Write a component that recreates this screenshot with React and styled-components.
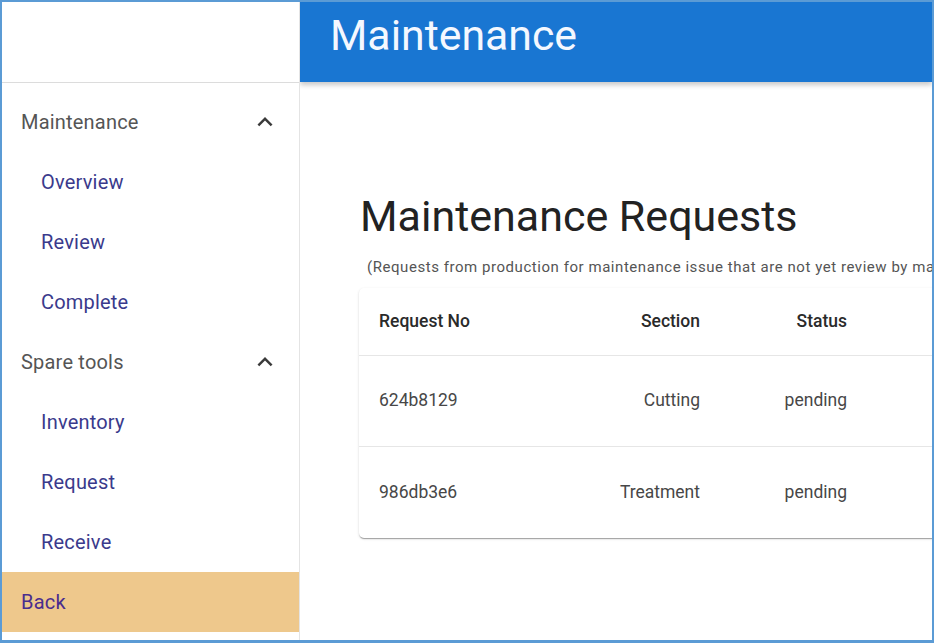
import React from 'react'
import styled, { createGlobalStyle } from 'styled-components'

const GlobalStyle = createGlobalStyle`
    html, body {
        margin: 0;
        padding: 0;
        background: #ffffff;
    }
    * {
        box-sizing: border-box;
    }
`;

// Marco exterior de la captura (borde azul claro)
const Frame = styled.div`
    width: 934px;
    height: 643px;
    border: 2px solid #5b9bd5;
    border-bottom-width: 3px;
    display: flex;
    overflow: hidden;
    font-family: Roboto, "Liberation Sans", sans-serif;
    background: #ffffff;
`;

/* ---------------- MENU LATERAL ---------------- */
const Sidebar = styled.nav`
    width: 298px;
    flex-shrink: 0;
    border-right: 1px solid #e4e4e4;
    display: flex;
    flex-direction: column;
`;

const SidebarTop = styled.div`
    height: 81px;
    flex-shrink: 0;
    border-bottom: 1px solid #dcdcdc;
`;

const MenuList = styled.ul`
    list-style: none;
    margin: 0;
    padding: 9px 0 0;
`;

const MenuItem = styled.li`
    height: 60px;
    display: flex;
    align-items: center;
    justify-content: space-between;
    padding: 0 19px 0 ${props => props.$nested ? '39px' : '19px'};
    font-size: 20px;
    letter-spacing: 0.2px;
    color: ${props => props.$nested ? '#3a3a8c' : '#555555'};
    background: ${props => props.$active ? '#eec88c' : 'transparent'};
    ${props => props.$active && 'color: #4a2d8e;'}
`;

const Chevron = () => (
    <svg width="30" height="30" viewBox="0 0 24 24" fill="#3a3a3a">
        <path d="m12 8-6 6 1.41 1.41L12 10.83l4.59 4.58L18 14z" />
    </svg>
);

/* ---------------- ZONA PRINCIPAL ---------------- */
const Main = styled.main`
    flex: 1;
    min-width: 0;
    display: flex;
    flex-direction: column;
    overflow: hidden;
`;

const AppBar = styled.header`
    height: 80px;
    flex-shrink: 0;
    background: #1976d2;
    box-shadow: 0 3px 5px rgba(0, 0, 0, 0.22);
    padding: 7px 30px 0;
    position: relative;
    z-index: 1;
`;

const AppTitle = styled.h1`
    margin: 0;
    font-size: 42.8px;
    font-weight: 400;
    line-height: 52px;
    color: #f4f8ff;
`;

const Content = styled.section`
    padding: 108px 0 0 60px;
`;

const PageTitle = styled.h2`
    margin: 0;
    font-size: 43px;
    font-weight: 400;
    line-height: 52.5px;
    color: #222222;
`;

const Caption = styled.p`
    margin: 12px 0 0;
    padding-left: 7px;
    font-size: 15px;
    line-height: 25px;
    letter-spacing: 0.55px;
    color: #555555;
    white-space: nowrap;
`;

const Card = styled.div`
    margin-top: 8px;
    margin-left: -1px;
    width: 640px;
    border-radius: 5px;
    background: #ffffff;
    box-shadow: 0 2px 1px -1px rgba(0, 0, 0, 0.2), 0 1px 1px 0 rgba(0, 0, 0, 0.14), 0 1px 3px 0 rgba(0, 0, 0, 0.12);
`;

const Row = styled.div`
    display: grid;
    grid-template-columns: 220px 141px 147px 1fr;
    height: ${props => props.$head ? '68px' : '91px'};
    align-items: center;
    border-bottom: ${props => props.$last ? 'none' : '1px solid #e6e6e6'};
`;

const Cell = styled.div`
    padding: 0 20px;
    font-size: 17.5px;
    line-height: 25px;
    font-weight: ${props => props.$head ? 500 : 400};
    color: ${props => props.$head ? '#2a2a2a' : '#474747'};
    text-align: ${props => props.$align || 'left'};
`;

const menu = [
    { label: 'Maintenance', chevron: true },
    { label: 'Overview', nested: true },
    { label: 'Review', nested: true },
    { label: 'Complete', nested: true },
    { label: 'Spare tools', chevron: true },
    { label: 'Inventory', nested: true },
    { label: 'Request', nested: true },
    { label: 'Receive', nested: true },
    { label: 'Back', active: true },
];

const requests = [
    { id: '624b8129', section: 'Cutting', status: 'pending' },
    { id: '986db3e6', section: 'Treatment', status: 'pending' },
];

const App = () => {
    return (
        <Frame>
            <GlobalStyle />
            <Sidebar>
                <SidebarTop />
                <MenuList>
                    {menu.map(item => (
                        <MenuItem key={item.label} $nested={item.nested} $active={item.active}>
                            <span>{item.label}</span>
                            {item.chevron && <Chevron />}
                        </MenuItem>
                    ))}
                </MenuList>
            </Sidebar>
            <Main>
                <AppBar>
                    <AppTitle>Maintenance</AppTitle>
                </AppBar>
                <Content>
                    <PageTitle>Maintenance Requests</PageTitle>
                    <Caption>(Requests from production for maintenance issue that are not yet review by maintenance)</Caption>
                    <Card>
                        <Row $head>
                            <Cell $head>Request No</Cell>
                            <Cell $head $align="right">Section</Cell>
                            <Cell $head $align="right">Status</Cell>
                            <Cell $head></Cell>
                        </Row>
                        {requests.map((r, i) => (
                            <Row key={r.id} $last={i === requests.length - 1}>
                                <Cell>{r.id}</Cell>
                                <Cell $align="right">{r.section}</Cell>
                                <Cell $align="right">{r.status}</Cell>
                                <Cell></Cell>
                            </Row>
                        ))}
                    </Card>
                </Content>
            </Main>
        </Frame>
    )
}

export default App
